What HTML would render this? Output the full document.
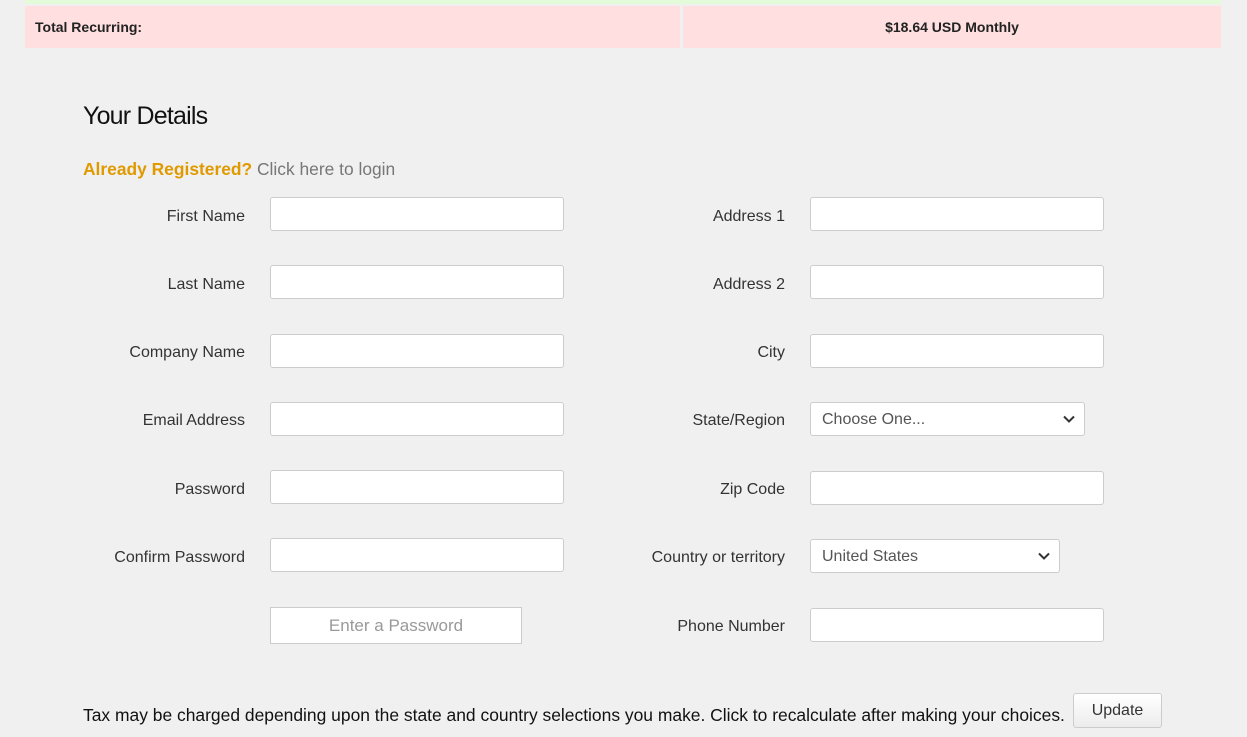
<!DOCTYPE html>
<html><head><style>
body{margin:0;width:1247px;height:737px;background:#f0f0f0;font-family:"Liberation Sans",Arial,sans-serif;position:relative;overflow:hidden}
.a{position:absolute}
.lbl{position:absolute;font-size:16px;color:#333;text-align:right;line-height:20px}
.inp{position:absolute;background:#fff;border:1px solid #ccc;border-radius:3px;box-sizing:border-box;height:34px}
.sel{font-size:16px;color:#555;line-height:33px;padding-left:11px}
.sel svg{position:absolute;right:9px;top:12px}
</style></head><body>
<div class="a" style="left:25px;top:0;width:1196px;height:4px;background:#e4fbd9"></div>
<div class="a" style="left:25px;top:6px;width:655px;height:42px;background:#ffdfdf"></div>
<div class="a" style="left:683px;top:6px;width:538px;height:42px;background:#ffdfdf"></div>
<div class="a" style="left:35px;top:19px;font-size:14px;font-weight:bold;color:#222">Total Recurring:</div>
<div class="a" style="left:683px;width:538px;top:19px;font-size:14px;font-weight:bold;color:#222;text-align:center">$18.64 USD Monthly</div>
<div class="a" style="left:83px;top:102px;font-size:25px;color:#111;letter-spacing:-0.8px">Your Details</div>
<div class="a" style="left:83px;top:159px;font-size:17.4px;color:#777"><b style="color:#e09a00">Already Registered?</b> Click here to login</div>

<div class="lbl" style="right:1002px;top:207px">First Name</div>
<div class="lbl" style="right:1002px;top:275px">Last Name</div>
<div class="lbl" style="right:1002px;top:343px">Company Name</div>
<div class="lbl" style="right:1002px;top:411px">Email Address</div>
<div class="lbl" style="right:1002px;top:480px">Password</div>
<div class="lbl" style="right:1002px;top:548px">Confirm Password</div>
<div class="inp" style="left:270px;top:197px;width:294px"></div>
<div class="inp" style="left:270px;top:265px;width:294px"></div>
<div class="inp" style="left:270px;top:334px;width:294px"></div>
<div class="inp" style="left:270px;top:402px;width:294px"></div>
<div class="inp" style="left:270px;top:470px;width:294px"></div>
<div class="inp" style="left:270px;top:538px;width:294px"></div>
<div class="a" style="left:270px;top:607px;width:252px;height:37px;box-sizing:border-box;border:1px solid #ccc;background:#fff;text-align:center;line-height:35px;font-size:17px;color:#999">Enter a Password</div>

<div class="lbl" style="right:462px;top:207px">Address 1</div>
<div class="lbl" style="right:462px;top:275px">Address 2</div>
<div class="lbl" style="right:462px;top:343px">City</div>
<div class="lbl" style="right:462px;top:411px">State/Region</div>
<div class="lbl" style="right:462px;top:480px">Zip Code</div>
<div class="lbl" style="right:462px;top:548px">Country or territory</div>
<div class="lbl" style="right:462px;top:617px">Phone Number</div>
<div class="inp" style="left:810px;top:197px;width:294px"></div>
<div class="inp" style="left:810px;top:265px;width:294px"></div>
<div class="inp" style="left:810px;top:334px;width:294px"></div>
<div class="inp sel" style="left:810px;top:402px;width:275px">Choose One...<svg width="12" height="8" viewBox="0 0 12 8"><path d="M1 1.5l5 5 5-5" fill="none" stroke="#333" stroke-width="2"/></svg></div>
<div class="inp" style="left:810px;top:471px;width:294px"></div>
<div class="inp sel" style="left:810px;top:539px;width:250px">United States<svg width="12" height="8" viewBox="0 0 12 8"><path d="M1 1.5l5 5 5-5" fill="none" stroke="#333" stroke-width="2"/></svg></div>
<div class="inp" style="left:810px;top:608px;width:294px"></div>

<div class="a" style="left:83px;top:705px;font-size:17.45px;color:#111;white-space:nowrap">Tax may be charged depending upon the state and country selections you make. Click to recalculate after making your choices.</div>
<div class="a" style="left:1073px;top:693px;width:89px;height:35px;box-sizing:border-box;border:1px solid #ccc;border-radius:3px;background:linear-gradient(#fff,#ececec);text-align:center;line-height:33px;font-size:16px;color:#333">Update</div>
</body></html>
